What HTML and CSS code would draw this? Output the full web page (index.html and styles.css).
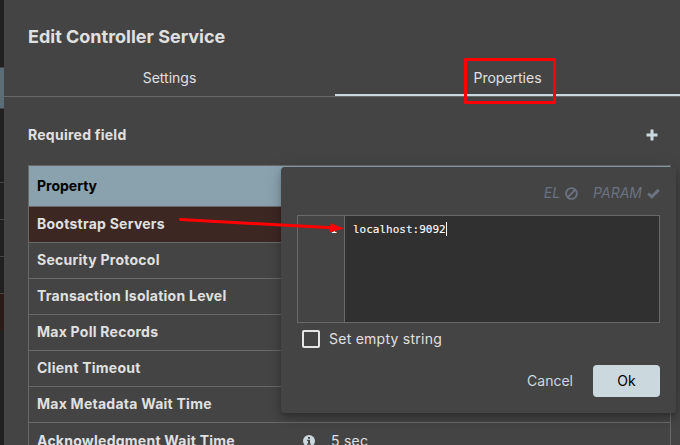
FILE: index.html
```html
<!DOCTYPE html>
<html lang="en">
<head>
<meta charset="utf-8">
<title>Edit Controller Service</title>
<link rel="stylesheet" href="styles.css">
</head>
<body>
<div class="app">
  <div class="backdrop">
    <div class="strip first"></div>
    <div class="strip selected"></div>
    <div class="strip tall"></div>
    <div class="strip"></div>
    <div class="strip"></div>
    <div class="strip invalid"></div>
  </div>
  <main class="dialog">
    <h1 class="title">Edit Controller Service</h1>
    <nav class="tabs">
      <div class="tab"><span>Settings</span></div>
      <div class="tab active"><span>Properties</span></div>
    </nav>
    <div class="toolbar">
      <span class="required">Required field</span>
      <svg class="plus" width="12" height="12" viewBox="0 0 12 12"><path d="M4.5 0.5h3v4h4v3h-4v4h-3v-4h-4v-3h4z"/></svg>
    </div>
    <div class="table">
      <div class="row head"><span class="name">Property</span></div>
      <div class="row edited"><span class="name">Bootstrap Servers</span></div>
      <div class="row"><span class="name">Security Protocol</span></div>
      <div class="row"><span class="name">Transaction Isolation Level</span></div>
      <div class="row"><span class="name">Max Poll Records</span></div>
      <div class="row"><span class="name">Client Timeout</span></div>
      <div class="row"><span class="name">Max Metadata Wait Time</span></div>
      <div class="row last">
        <span class="name">Acknowledgment Wait Time</span>
        <svg class="info" width="12" height="12" viewBox="0 0 12 12"><circle cx="6" cy="6" r="6"/><path d="M5 2h2v1.7H5zM4.2 4.8H7v3.6h.9v1.3H4.1V8.4H5V6.1h-.8z"/></svg>
        <span class="value">5 sec</span>
      </div>
    </div>
  </main>
</div>

<section class="popup">
  <div class="hints">
    <span class="hint">EL</span>
    <svg class="ban" width="13" height="13" viewBox="0 0 13 13"><circle cx="6.5" cy="6.5" r="5.4"/><path d="M2.700 10.300l7.600-7.600"/></svg>
    <span class="hint param">PARAM</span>
    <svg class="check" width="13" height="11" viewBox="0 0 13 11"><path d="M1.200 5.500l3.600 3.400 7-7"/></svg>
  </div>
  <div class="editor">
    <div class="gutter">1</div>
    <div class="code">localhost:9092<span class="caret"></span></div>
  </div>
  <label class="empty"><span class="box"></span><span>Set empty string</span></label>
  <div class="actions">
    <span class="cancel">Cancel</span>
    <span class="ok">Ok</span>
  </div>
</section>

<div class="highlight"></div>
<svg class="arrow" width="680" height="445" viewBox="0 0 680 445"><path class="shaft" d="M180.500 219.500L332 227.800"/><path class="tip" d="M330.500 223.300L344.500 228.500L330 232.300z"/></svg>
</body>
</html>
```
FILE: styles.css
```css
* { box-sizing: border-box; }
body {
  margin: 0;
  width: 680px;
  height: 445px;
  overflow: hidden;
  position: relative;
  background: #444;
  color: #e0e0e0;
  font: 400 14px/20px Inter, sans-serif;
}
svg { display: block; flex: none; }
.app { display: flex; height: 445px; overflow: hidden; }
.backdrop { width: 4px; flex: none; background: #202020; }
.strip { height: 37px; border-bottom: 1px solid #444; }
.strip.first { height: 68px; }
.strip.selected { height: 41px; background: #5b6d76; }
.strip.tall { height: 111px; background: linear-gradient(#444, #444) 0 73px / 4px 1px no-repeat; }
.strip.selected + .strip.tall { height: 111px; }
.strip.invalid { height: 36px; background: #2c1a18; border: 0; }
.dialog { flex: 1; min-width: 0; height: 445px; }
.title { margin: 0; padding: 24px 24px 0; height: 60px; font-size: 18px; line-height: 26px; font-weight: 700; }
.tabs { display: flex; height: 37px; border-bottom: 1px solid #696969; }
.tab { flex: 0 0 331px; height: 36px; display: flex; justify-content: center; align-items: center; }
.tab.active { flex-basis: 345px; border-bottom: 2px solid #cbd8dd; padding-top: 2px; }
.toolbar { display: flex; justify-content: space-between; align-items: center; height: 68px; padding: 8px 22px 0 24px; }
.required { font-weight: 700; letter-spacing: .25px; }
.plus { fill: #cbd8dd; }
.table { width: 643px; margin-left: 24px; border: 1px solid #696969; border-bottom: 0; }
.row { display: flex; align-items: center; height: 36px; padding: 0 0 1px 8px; border-bottom: 1px solid #696969; letter-spacing: .25px; }
.row.head { height: 41px; padding-bottom: 0; background: #8aa2ae; color: #000; letter-spacing: 0; }
.row.edited { background: #3d2723; }
.row.last { height: 37px; padding-bottom: 0; }
.name { width: 266px; font-weight: 700; white-space: nowrap; }
.info { fill: #cbd8dd; }
.info path { fill: #444; }
.value { margin-left: 16px; }

.popup {
  position: absolute;
  left: 281px;
  top: 167px;
  width: 395px;
  height: 246px;
  padding: 16px;
  border-radius: 4px;
  background: #444;
  box-shadow: 0 3px 5px -1px rgba(0,0,0,.2), 0 6px 10px rgba(0,0,0,.14), 0 1px 18px rgba(0,0,0,.12);
}
.hints { display: flex; justify-content: flex-end; align-items: center; height: 20px; margin-bottom: 12px; color: #6b7280; font-style: italic; }
.ban { margin-left: 5px; fill: none; stroke: #6b7280; stroke-width: 1.900; }
.param { margin-left: 15px; }
.check { margin-left: 5px; fill: none; stroke: #6b7280; stroke-width: 3; }
.editor { display: flex; height: 108px; border: 1px solid #696969; font: 11px/16px "DejaVu Sans Mono", monospace; color: #fff; }
.gutter { width: 47px; padding: 6px 7px 0 0; text-align: right; border-right: 1px solid #696969; }
.code { flex: 1; display: flex; padding: 6px 0 0 8px; background: #303030; -webkit-text-stroke: .1px #fff; }
.caret { width: 1px; height: 14px; background: #fff; }
.empty { display: flex; align-items: center; gap: 9px; height: 32px; padding-left: 5px; letter-spacing: .25px; }
.box { width: 18px; height: 18px; border: 2px solid #e6e6e6; border-radius: 2px; }
.actions { display: flex; justify-content: flex-end; align-items: center; margin-top: 10px; height: 32px; }
.cancel { color: #cbd8dd; margin-right: 20px; }
.ok { width: 67px; line-height: 32px; text-align: center; color: #000; background: #cbd8dd; border-radius: 4px; }

.highlight { position: absolute; left: 464px; top: 58px; width: 92px; height: 46px; border: 3px solid #f00; border-radius: 1px; }
.arrow { position: absolute; left: 0; top: 0; }
.shaft { fill: none; stroke: #f00; stroke-width: 3; stroke-linecap: round; }
.tip { fill: #f00; }
```
